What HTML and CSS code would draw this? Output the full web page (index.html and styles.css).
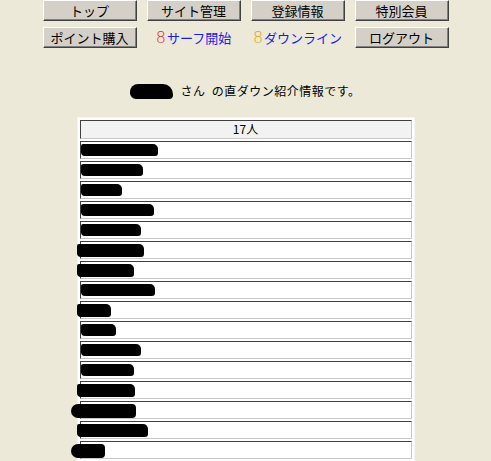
FILE: index.html
```html
<!DOCTYPE html>
<html lang="ja">
<head>
  <meta charset="UTF-8" />
  <title>直ダウン紹介情報</title>
  <link rel="stylesheet" href="styles.css">
</head>
<body>
  <div class="menu">
    <button class="btn">トップ</button>
    <button class="btn">サイト管理</button>
    <button class="btn">登録情報</button>
    <button class="btn">特別会員</button>
    <button class="btn">ポイント購入</button>
    <a class="link" href="#"><span class="num red">8</span>サーフ開始</a>
    <a class="link" href="#"><span class="num orange">8</span>ダウンライン</a>
    <button class="btn">ログアウト</button>
  </div>

  <p class="title"><span class="blot name"></span>さん&nbsp;&nbsp;の直ダウン紹介情報です。</p>

  <div class="list">
    <div class="cell head">17人</div>
    <div class="cell"><span class="blot" style="width:77px"></span></div>
    <div class="cell"><span class="blot" style="width:62px"></span></div>
    <div class="cell"><span class="blot" style="width:41px"></span></div>
    <div class="cell"><span class="blot" style="width:73px"></span></div>
    <div class="cell"><span class="blot" style="width:60px"></span></div>
    <div class="cell"><span class="blot out" style="width:67px"></span></div>
    <div class="cell"><span class="blot out" style="width:57px"></span></div>
    <div class="cell"><span class="blot" style="width:74px"></span></div>
    <div class="cell"><span class="blot out" style="width:34px"></span></div>
    <div class="cell"><span class="blot" style="width:35px"></span></div>
    <div class="cell"><span class="blot" style="width:60px"></span></div>
    <div class="cell"><span class="blot" style="width:53px"></span></div>
    <div class="cell"><span class="blot out" style="width:58px"></span></div>
    <div class="cell"><span class="blot far" style="width:65px"></span></div>
    <div class="cell"><span class="blot out" style="width:71px"></span></div>
    <div class="cell"><span class="blot far" style="width:34px"></span></div>
    <div class="cell"><span class="blot" style="width:50px"></span></div>
  </div>
</body>
</html>
```

FILE: styles.css
```css
html {
  overflow: hidden;
}
body {
  font-family: "Noto Sans CJK JP", "Noto Sans", sans-serif;
  font-size: 12px;
  background-color: #ece9d8;
  margin: 0;
  padding: 0;
  color: #000;
}
.menu {
  display: grid;
  grid-template-columns: repeat(4, 94px);
  grid-auto-rows: 21px;
  column-gap: 10px;
  row-gap: 6px;
  justify-content: center;
}
.btn {
  margin: 0;
  height: 21px;
  padding: 0;
  font-family: inherit;
  font-size: 13px;
  line-height: 17px;
  color: #000;
  background-color: #d4d0c8;
  border-top: 1px solid #fff;
  border-left: 1px solid #fff;
  border-right: 1px solid #404040;
  border-bottom: 1px solid #404040;
  box-shadow: inset -1px -1px 0 #808080;
}
.link {
  display: flex;
  align-items: center;
  justify-content: center;
  color: #1a1aee;
  font-size: 13px;
  text-decoration: none;
  height: 21px;
}
.num {
  font-family: "DejaVu Sans", sans-serif;
  font-size: 16px;
  font-weight: 200;
  margin-right: 1px;
}
.red {
  color: #e8281c;
}
.orange {
  color: #e0a010;
}
.title {
  margin: 35px 0 0;
  text-align: center;
  line-height: 16px;
  letter-spacing: 0.5px;
}
.title .name {
  width: 43px;
  height: 15px;
  margin-right: 7px;
  border-radius: 8px 10px 4px 6px;
  vertical-align: -3px;
}
.list {
  width: 332px;
  margin: 18px auto 0;
  padding: 2px;
  background-color: #fff;
  border: 1px solid #f4f4f0;
}
.cell {
  height: 18px;
  box-sizing: border-box;
  margin-bottom: 2px;
  border-top: 1px solid #404040;
  border-left: 1px solid #404040;
  border-right: 1px solid #c8c8c8;
  border-bottom: 1px solid #c8c8c8;
  line-height: 16px;
}
.head {
  height: 19px;
  background-color: #f2f2f2;
  text-align: center;
  font-size: 12px;
}
.blot {
  display: inline-block;
  height: 12px;
  background-color: #000;
  border-radius: 2px 5px 3px 4px;
  vertical-align: middle;
}
.cell .blot {
  margin-top: 2px;
  vertical-align: top;
}
.cell .out {
  margin-left: -4px;
  height: 13px;
}
.cell .far {
  margin-left: -10px;
  height: 14px;
  border-radius: 7px 4px 4px 7px;
}
```
